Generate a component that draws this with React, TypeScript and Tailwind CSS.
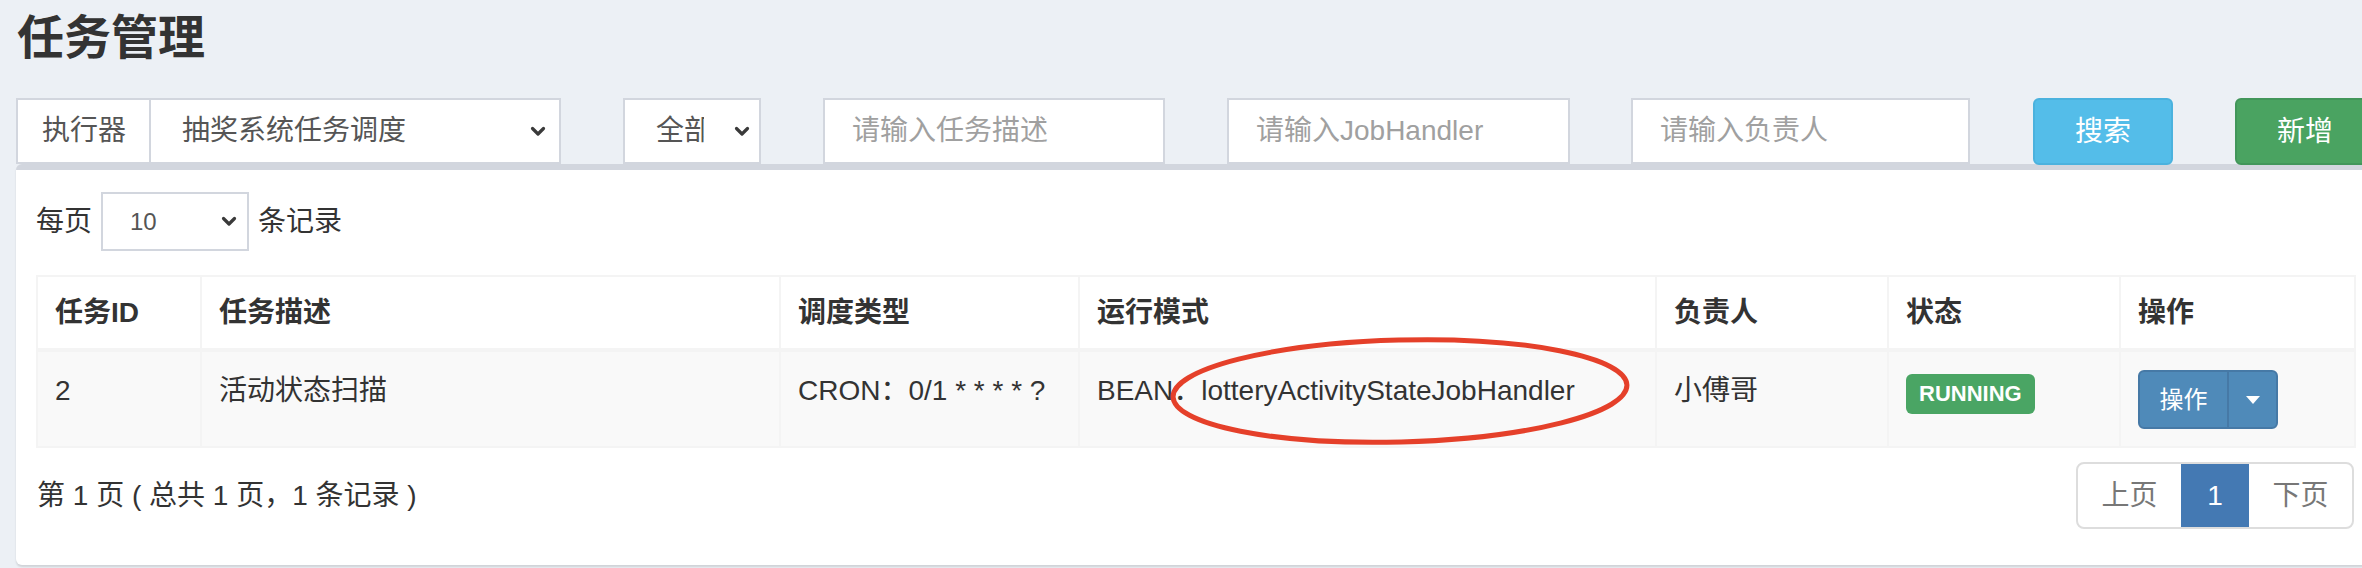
import React from 'react'

const Chevron = () => (
  <svg width="16" height="11" viewBox="0 0 16 11" className="shrink-0">
    <path d="M2.5 2.5 L8 8 L13.5 2.5" fill="none" stroke="#3a3a3a" strokeWidth="3.2" strokeLinecap="round" strokeLinejoin="round" />
  </svg>
)

const columns = [
  { label: '任务ID', width: 'w-[164px]' },
  { label: '任务描述', width: 'w-[579px]' },
  { label: '调度类型', width: 'w-[299px]' },
  { label: '运行模式', width: 'w-[577px]' },
  { label: '负责人', width: 'w-[232px]' },
  { label: '状态', width: 'w-[232px]' },
  { label: '操作', width: 'w-[235px]' },
]

const App = () => {
  return (
    <div className="relative w-[2362px] h-[568px] overflow-hidden bg-[#ecf0f5] text-[#333] font-['Liberation_Sans','Noto_Sans_CJK_SC',sans-serif]">
      {/* Header */}
      <div className="pt-[14px] pl-[17px]">
        <h1 className="h-[48px] leading-[48px] text-[47px] font-bold text-[#333]">任务管理</h1>
      </div>

      {/* Filters */}
      <div className="flex mt-[36px] pl-[16px] h-[66px] text-[28px]">
        <div className="flex w-[545px] shrink-0">
          <div className="w-[135px] flex items-center pl-[24px] bg-white border-2 border-[#d2d6de] text-[#555]">执行器</div>
          <div className="flex-1 flex items-center justify-between pl-[31px] pr-[13px] bg-white border-2 border-l-0 border-[#d2d6de] text-[#555]">
            <span>抽奖系统任务调度</span>
            <Chevron />
          </div>
        </div>
        <div className="ml-[62px] w-[138px] shrink-0 flex items-center justify-between pl-[31px] pr-[9px] bg-white border-2 border-[#d2d6de] text-[#555]">
          <span className="w-[48px] overflow-hidden whitespace-nowrap">全部</span>
          <Chevron />
        </div>
        <div className="ml-[62px] w-[342px] shrink-0 flex items-center pl-[27px] bg-white border-2 border-[#d2d6de] text-[#a0a0a0]">请输入任务描述</div>
        <div className="ml-[62px] w-[343px] shrink-0 flex items-center pl-[27px] bg-white border-2 border-[#d2d6de] text-[#a0a0a0]">请输入JobHandler</div>
        <div className="ml-[61px] w-[339px] shrink-0 flex items-center pl-[27px] bg-white border-2 border-[#d2d6de] text-[#a0a0a0]">请输入负责人</div>
        <button className="ml-[63px] w-[140px] h-[67px] shrink-0 rounded-[6px] bg-[#54bde9] border-2 border-[#4bb2de] text-white">搜索</button>
        <button className="ml-[62px] w-[140px] h-[67px] shrink-0 rounded-[6px] bg-[#4aa361] border-2 border-[#42965a] text-white">新增</button>
      </div>

      {/* Box */}
      <div className="ml-[16px] w-[2358px] h-[401px] bg-white border-t-[6px] border-[#d2d6de] rounded-[6px] shadow-[0_2px_2px_rgba(0,0,0,0.12)] pt-[22px] px-[20px] text-[28px]">
        <div className="flex items-center h-[59px]">
          <span>每页</span>
          <div className="ml-[9px] w-[148px] h-[59px] flex items-center justify-between pl-[27px] pr-[10px] border-2 border-[#d2d6de] text-[24px] text-[#555]">
            <span>10</span>
            <Chevron />
          </div>
          <span className="ml-[9px]">条记录</span>
        </div>

        <table className="mt-[24px] border-collapse table-fixed w-[2318px]">
          <thead>
            <tr className="h-[74px]">
              {columns.map((c) => (
                <th key={c.label} className={`${c.width} border-2 border-b-4 border-[#f4f4f4] text-left align-middle px-[17px] font-bold leading-[40px]`}>
                  {c.label}
                </th>
              ))}
            </tr>
          </thead>
          <tbody>
            <tr className="h-[97px] bg-[#f9f9f9]">
              <td className="border-2 border-[#f4f4f4] align-top px-[17px] pt-[19px] leading-[40px]">2</td>
              <td className="border-2 border-[#f4f4f4] align-top px-[17px] pt-[19px] leading-[40px]">活动状态扫描</td>
              <td className="border-2 border-[#f4f4f4] align-top px-[17px] pt-[19px] leading-[40px] whitespace-nowrap">CRON：0/1 * * * * ?</td>
              <td className="border-2 border-[#f4f4f4] align-top px-[17px] pt-[19px] leading-[40px] whitespace-nowrap">BEAN：lotteryActivityStateJobHandler</td>
              <td className="border-2 border-[#f4f4f4] align-top px-[17px] pt-[19px] leading-[40px]">小傅哥</td>
              <td className="border-2 border-[#f4f4f4] align-top px-[17px] pt-[20px] leading-[40px]">
                <span className="inline-flex items-center h-[40px] px-[13px] rounded-[6px] bg-[#4aa564] text-white text-[22px] font-bold">RUNNING</span>
              </td>
              <td className="border-2 border-[#f4f4f4] align-top px-[17px] pt-[18px]">
                <div className="flex h-[59px] w-[140px] rounded-[6px] overflow-hidden border-2 border-[#4679a6] bg-[#4f8ab9] text-white text-[24px]">
                  <div className="w-[89px] flex items-center justify-center border-r-2 border-[#4679a6]">操作</div>
                  <div className="flex-1 flex items-center justify-center">
                    <svg width="14" height="8" viewBox="0 0 14 8">
                      <path d="M0 0 L14 0 L7 8 Z" fill="white" />
                    </svg>
                  </div>
                </div>
              </td>
            </tr>
          </tbody>
        </table>

        {/* Footer */}
        <div className="flex items-center justify-between mt-[14px] w-[2318px]">
          <span className="pl-[1px]">第 1 页 ( 总共 1 页，1 条记录 )</span>
          <div className="flex h-[67px] rounded-[8px] border-2 border-[#ddd] overflow-hidden">
            <div className="w-[103px] flex items-center justify-center text-[#777]">上页</div>
            <div className="w-[68px] flex items-center justify-center bg-[#4479b3] text-white">1</div>
            <div className="w-[103px] flex items-center justify-center text-[#777]">下页</div>
          </div>
        </div>
      </div>

      {/* Annotation */}
      <svg className="absolute left-[1158px] top-[328px] pointer-events-none" width="484" height="128" viewBox="0 0 484 128">
        <ellipse cx="242" cy="63" rx="227" ry="51" fill="none" stroke="#e5402a" strokeWidth="5" transform="rotate(-1.5 242 63)" />
      </svg>
    </div>
  )
}

export default App
